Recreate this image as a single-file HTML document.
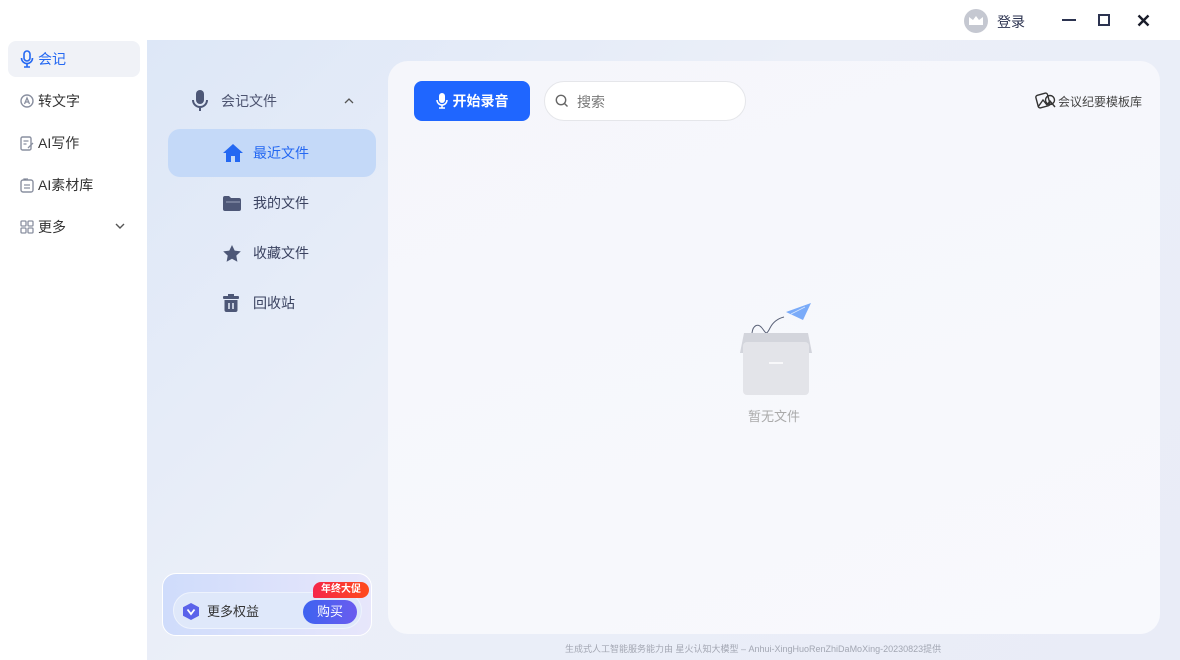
<!DOCTYPE html>
<html><head><meta charset="utf-8"><style>
*{margin:0;padding:0;box-sizing:border-box}
body{width:1180px;height:660px;overflow:hidden;background:#fff;font-family:"Liberation Sans","Noto Sans CJK SC",sans-serif;position:relative;color:#333}
.abs{position:absolute}
.nav{position:absolute;left:8px;width:132px;height:36px;border-radius:8px;display:flex;align-items:center;padding-left:12px;font-size:14px;color:#333}
.nav svg{margin-right:4px}
.main{position:absolute;left:147px;top:40px;width:1033px;height:620px;background:linear-gradient(135deg,#dde7f7 0%,#ebeff8 40%,#e9ecf7 100%)}
.sub{position:absolute;left:168px;width:208px;height:48px;border-radius:12px;display:flex;align-items:center;padding-left:55px;font-size:14px;color:#3a4260}
.sub svg{position:absolute;left:55px}
.sub span{margin-left:30px}
.panel{position:absolute;left:388px;top:61px;width:772px;height:573px;background:linear-gradient(160deg,#f5f6fb,#f8f9fd);border-radius:20px}
</style></head><body>
<div class="abs" style="left:964px;top:9px;width:24px;height:24px;border-radius:50%;background:#c5c8d1"></div>
<svg class="abs" style="left:968px;top:15px" width="16" height="12"><path d="M1 2l4 3 3-4 3 4 4-3v8H1z" fill="#fff"/></svg>
<div class="abs" style="left:997px;top:12px;font-size:14px;color:#2c3350">登录</div>
<div class="abs" style="left:1062px;top:19px;width:14px;height:2px;background:#2c3350"></div>
<div class="abs" style="left:1098px;top:14px;width:12px;height:12px;border:2px solid #2c3350"></div>
<svg class="abs" style="left:1137px;top:14px" width="13" height="13"><path d="M1.5 1.5l10 10M11.5 1.5l-10 10" stroke="#1a1d2a" stroke-width="2.4"/></svg>

<div class="nav" style="top:41px;background:#f0f2f7;color:#2468f2"><svg width="14" height="18" viewBox="0 0 14 18"><rect x="4" y="1" width="6" height="10" rx="3" fill="none" stroke="#2468f2" stroke-width="1.6"/><path d="M1.5 8a5.5 5.5 0 0011 0M7 13.5V17M4 17h6" fill="none" stroke="#2468f2" stroke-width="1.6"/></svg>会记</div>
<div class="nav" style="top:83px"><svg width="14" height="14" viewBox="0 0 14 14"><circle cx="7" cy="7" r="6" fill="none" stroke="#8a90a0" stroke-width="1.4"/><path d="M4.5 10l2.5-6 2.5 6M5.5 8h3" fill="none" stroke="#8a90a0" stroke-width="1.3"/></svg>转文字</div>
<div class="nav" style="top:125px"><svg width="14" height="15" viewBox="0 0 14 15"><rect x="1" y="1" width="10" height="13" rx="1.5" fill="none" stroke="#8a90a0" stroke-width="1.4"/><path d="M3.5 5h5M3.5 8h3M8 12l5-5" stroke="#8a90a0" stroke-width="1.3"/></svg>AI写作</div>
<div class="nav" style="top:167px"><svg width="14" height="15" viewBox="0 0 14 15"><rect x="1" y="2" width="12" height="12" rx="2" fill="none" stroke="#8a90a0" stroke-width="1.4"/><path d="M4 7h6M4 10h6M4 2V1h4" stroke="#8a90a0" stroke-width="1.3"/></svg>AI素材库</div>
<div class="nav" style="top:209px"><svg width="14" height="14" viewBox="0 0 14 14" fill="none" stroke="#8a90a0" stroke-width="1.3"><rect x="1" y="1" width="5" height="5" rx="1"/><rect x="8" y="1" width="5" height="5" rx="1"/><rect x="1" y="8" width="5" height="5" rx="1"/><rect x="8" y="8" width="5" height="5" rx="1"/></svg>更多
<svg class="abs" style="left:107px;top:14px" width="10" height="7"><path d="M1 1l4 4 4-4" fill="none" stroke="#555" stroke-width="1.4"/></svg></div>

<div class="main"></div>

<svg class="abs" style="left:192px;top:90px" width="16" height="22" viewBox="0 0 16 22"><rect x="4" y="0" width="8" height="14" rx="4" fill="#4d5777"/><path d="M1 10a7 7 0 0014 0M8 17v4" fill="none" stroke="#4d5777" stroke-width="2"/></svg>
<div class="abs" style="left:221px;top:91px;font-size:14px;color:#4d5470">会记文件</div>
<svg class="abs" style="left:344px;top:98px" width="10" height="6"><path d="M1 5l4-4 4 4" fill="none" stroke="#555" stroke-width="1.3"/></svg>
<div class="sub" style="top:129px;background:#c4d9f8;color:#2468f2"><svg width="20" height="18" viewBox="0 0 20 18"><path d="M10 0L0 9h3v9h5v-6h4v6h5V9h3z" fill="#2468f2"/></svg><span>最近文件</span></div>
<div class="sub" style="top:179px"><svg width="18" height="16" viewBox="0 0 18 16"><path d="M0 3a2 2 0 012-2h4l2 2h8a2 2 0 012 2v9a2 2 0 01-2 2H2a2 2 0 01-2-2z" fill="#4d5777"/><path d="M3 7h14" stroke="#9aa3bb" stroke-width="1"/></svg><span>我的文件</span></div>
<div class="sub" style="top:229px"><svg width="18" height="17" viewBox="0 0 18 17"><path d="M9 0l2.7 5.6 6.1.8-4.5 4.2 1.1 6.1L9 13.8l-5.4 2.9 1.1-6.1L.2 6.4l6.1-.8z" fill="#4d5777"/></svg><span>收藏文件</span></div>
<div class="sub" style="top:279px"><svg width="16" height="18" viewBox="0 0 16 18"><rect x="0" y="2" width="16" height="3" rx="1" fill="#4d5777"/><rect x="5" y="0" width="6" height="2" fill="#4d5777"/><path d="M1.5 6h13v10a2 2 0 01-2 2h-9a2 2 0 01-2-2z" fill="#4d5777"/><path d="M6 9v6M10 9v6" stroke="#dfe6f4" stroke-width="1.6"/></svg><span>回收站</span></div>

<div class="abs" style="left:162px;top:573px;width:210px;height:63px;border-radius:14px;background:linear-gradient(90deg,#cfdcfb,#e7e6fb);border:1px solid #fff"></div>
<div class="abs" style="left:173px;top:592px;width:189px;height:37px;border-radius:19px;background:#dfe8fa;border:1px solid #eef3fd"></div>
<svg class="abs" style="left:183px;top:603px" width="16" height="17" viewBox="0 0 16 17"><path d="M8 0l8 4.3v8.4L8 17 0 12.7V4.3z" fill="#5b63ea"/><path d="M4.5 6.5L8 11l3.5-4.5" fill="none" stroke="#fff" stroke-width="1.8"/></svg>
<div class="abs" style="left:207px;top:603px;font-size:13px;color:#333;line-height:18px">更多权益</div>
<div class="abs" style="left:303px;top:600px;width:54px;height:24px;border-radius:12px;background:linear-gradient(90deg,#3e63f0,#6a5cef);color:#fff;font-size:13px;text-align:center;line-height:24px">购买</div>
<div class="abs" style="left:313px;top:582px;width:56px;height:16px;border-radius:8px 8px 8px 2px;background:linear-gradient(90deg,#f5264a,#ff4a1c);color:#fff;font-size:10px;font-weight:bold;text-align:center;line-height:16px">年终大促</div>

<div class="panel"></div>
<div class="abs" style="left:414px;top:81px;width:116px;height:40px;border-radius:8px;background:#1f66ff;color:#fff;font-size:14px;font-weight:bold;display:flex;align-items:center;justify-content:center"><svg width="12" height="16" viewBox="0 0 12 16" style="margin-right:5px"><rect x="3" y="0" width="6" height="10" rx="3" fill="#fff"/><path d="M1 7a5 5 0 0010 0M6 12v3M3 15h6" fill="none" stroke="#fff" stroke-width="1.5"/></svg>开始录音</div>
<div class="abs" style="left:544px;top:81px;width:202px;height:40px;border-radius:20px;background:#fff;border:1px solid #e5e6ea"></div>
<svg class="abs" style="left:555px;top:94px" width="14" height="14"><circle cx="6" cy="6" r="4.7" fill="none" stroke="#666" stroke-width="1.4"/><path d="M9.5 9.5l3 3" stroke="#666" stroke-width="1.4"/></svg>
<div class="abs" style="left:577px;top:92px;font-size:14px;color:#777">搜索</div>
<svg class="abs" style="left:1035px;top:91px" width="22" height="19" viewBox="0 0 22 19" fill="none" stroke="#333" stroke-width="1.4"><rect x="2" y="3" width="12" height="13" rx="2" transform="rotate(-15 8 10)"/><path d="M3 16l5-7 4 5 3-4 5 6"/><circle cx="15" cy="9" r="4.5"/></svg>
<div class="abs" style="left:1058px;top:93px;font-size:12px;color:#444">会议纪要模板库</div>

<svg class="abs" style="left:738px;top:302px" width="76" height="94" viewBox="0 0 76 94"><path d="M14 31c1-8 6-10 10-5s4 8 8 0c4-8 10-10 14-11" fill="none" stroke="#5a6278" stroke-width="1"/><path d="M48 10L73 1 65 18z" fill="#7aabf9"/><path d="M53 12l14-7" stroke="#d7e6fd" stroke-width="0.8"/><path d="M6 31h64l4 20H2z" fill="#d3d5dc"/><rect x="5" y="40" width="66" height="53" rx="4" fill="#e3e4e9"/><path d="M31 61h14" stroke="#fff" stroke-width="1.5"/></svg>
<div class="abs" style="left:748px;top:406px;font-size:13px;color:#aaa">暂无文件</div>

<div class="abs" style="left:565px;top:642px;font-size:9px;color:#a3a7b3;white-space:nowrap">生成式人工智能服务能力由 星火认知大模型 – Anhui-XingHuoRenZhiDaMoXing-20230823提供</div>
</body></html>
